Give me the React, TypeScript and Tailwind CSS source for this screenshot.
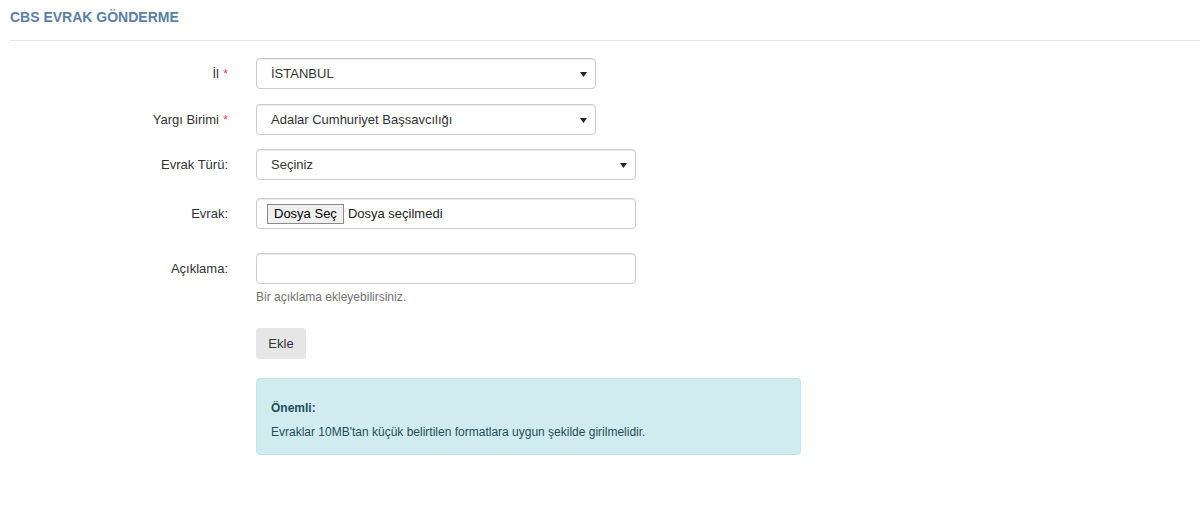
import { ReactNode } from "react";

function Label({ children, required }: { children: ReactNode; required?: boolean }) {
  return (
    <div className="w-[218px] shrink-0 text-right text-[13px] text-[#333]">
      {children}
      {required && <span className="ml-1 text-[#d9534f]">*</span>}
    </div>
  );
}

function SelectBox({ value, wide }: { value: string; wide?: boolean }) {
  return (
    <div
      className={`relative flex h-[31px] items-center rounded-[4px] border border-[#ccc] bg-white pl-[14px] text-[13px] text-[#333] shadow-[inset_0_1px_1px_rgba(0,0,0,0.075)] ${
        wide ? "w-[380px]" : "w-[340px]"
      }`}
    >
      {value}
      <svg
        className="absolute right-[8px] top-[13px]"
        width="7"
        height="5"
        viewBox="0 0 7 5"
      >
        <path d="M0 0h7L3.5 5z" fill="#222" />
      </svg>
    </div>
  );
}

export default function App() {
  return (
    <div className="min-h-[506px] bg-white pl-[10px] font-['Liberation_Sans',Arial,sans-serif]">
      <div className="flex h-[41px] items-center border-b border-[#e5e5e5] pb-[6px]">
        <h1 className="text-[14px] font-bold text-[#5b80a8]">CBS EVRAK GÖNDERME</h1>
      </div>

      <div className="flex flex-col pt-[17px]">
        <div className="flex items-center gap-[28px]">
          <Label required>İl</Label>
          <SelectBox value="İSTANBUL" />
        </div>

        <div className="mt-[15px] flex items-center gap-[28px]">
          <Label required>Yargı Birimi</Label>
          <SelectBox value="Adalar Cumhuriyet Başsavcılığı" />
        </div>

        <div className="mt-[14px] flex items-center gap-[28px]">
          <Label>Evrak Türü:</Label>
          <SelectBox value="Seçiniz" wide />
        </div>

        <div className="mt-[18px] flex items-center gap-[28px]">
          <Label>Evrak:</Label>
          <div className="flex h-[31px] w-[380px] items-center rounded-[4px] border border-[#ccc] bg-white pl-[10px] text-[13px] text-[#222] shadow-[inset_0_1px_1px_rgba(0,0,0,0.075)]">
            <span className="flex h-[20px] items-center border border-[#8a8a8a] bg-[#efefef] px-[6px] text-[13px] text-black">
              Dosya Seç
            </span>
            <span className="ml-[4px]">Dosya seçilmedi</span>
          </div>
        </div>

        <div className="mt-[24px] flex items-center gap-[28px]">
          <Label>Açıklama:</Label>
          <div className="h-[31px] w-[380px] rounded-[4px] border border-[#ccc] bg-white shadow-[inset_0_1px_1px_rgba(0,0,0,0.075)]" />
        </div>

        <div className="ml-[246px] mt-[4px] text-[12px] text-[#737373]">Bir açıklama ekleyebilirsiniz.</div>

        <div className="ml-[246px] mt-[22px]">
          <button className="h-[31px] w-[50px] rounded-[3px] bg-[#e6e6e6] text-[13px] text-[#333]">Ekle</button>
        </div>

        <div className="ml-[246px] mt-[19px] flex h-[77px] w-[545px] flex-col gap-[6px] rounded-[4px] border border-[#bee5eb] bg-[#d1ecf1] px-[14px] pt-[20px] text-[12px] text-[#1f4e58]">
          <div className="font-bold">Önemli:</div>
          <div>Evraklar 10MB'tan küçük belirtilen formatlara uygun şekilde girilmelidir.</div>
        </div>
      </div>
    </div>
  );
}
